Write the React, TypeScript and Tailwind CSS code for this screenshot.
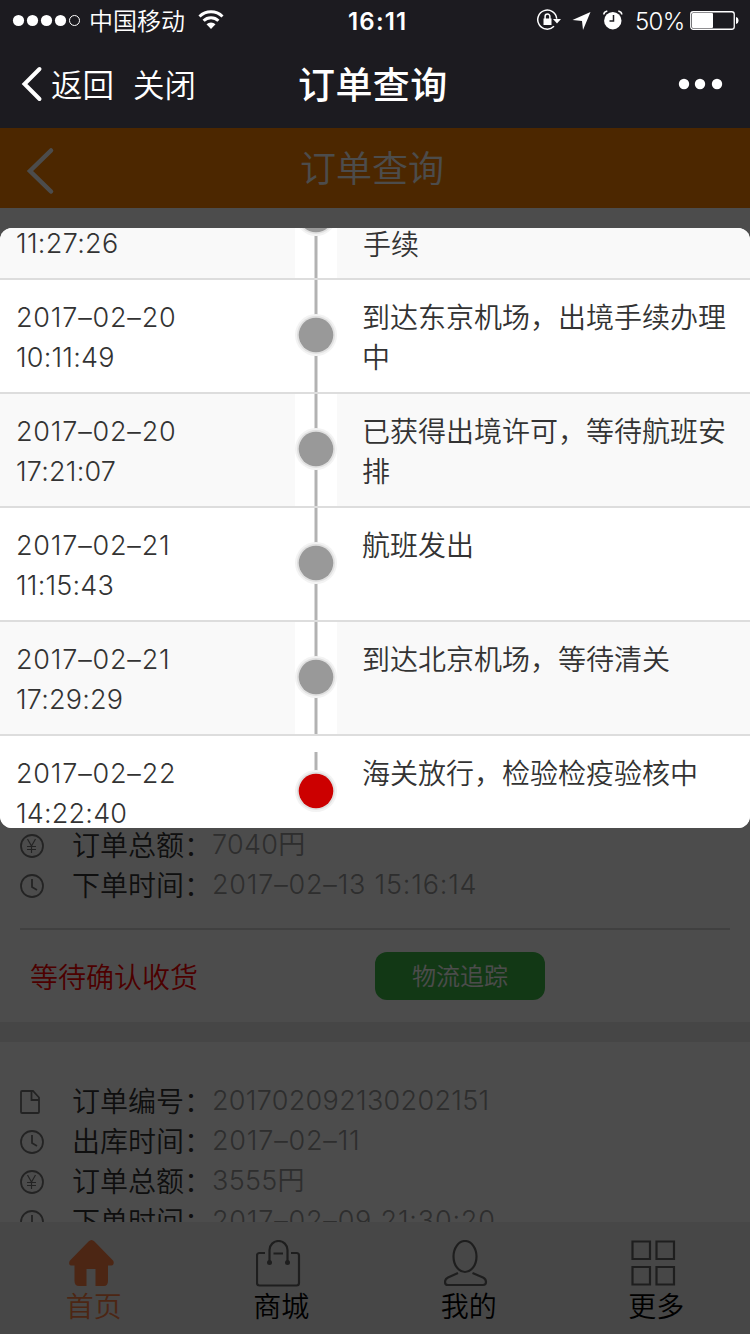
import React from 'react';

const FONT = "font-['Inter','Noto_Sans_CJK_SC',sans-serif]";

const events = [
  { date: '2017–02–20', time: '10:11:49', text: '到达东京机场，出境手续办理中' },
  { date: '2017–02–20', time: '17:21:07', text: '已获得出境许可，等待航班安排' },
  { date: '2017–02–21', time: '11:15:43', text: '航班发出' },
  { date: '2017–02–21', time: '17:29:29', text: '到达北京机场，等待清关' },
  { date: '2017–02–22', time: '14:22:40', text: '海关放行，检验检疫验核中' },
];

function Dot({ last = false, height = 112 }: { last?: boolean; height?: number }) {
  const cy = height / 2 - 1;
  return (
    <svg width="42" height={height} className="shrink-0 bg-white">
      <path d={last ? 'M21 16V40' : `M21 0V${height}`} stroke="#b2b2b2" strokeWidth="3" />
      <circle cx="21" cy={cy} r="21" fill="#f3f3f3" />
      <circle cx="21" cy={cy} r="19" fill="#e0e0e0" />
      <circle cx="21" cy={cy} r="17.3" fill={last ? '#cc0000' : '#999999'} />
    </svg>
  );
}

function ClockIcon() {
  return (
    <svg width="24" height="24" viewBox="0 0 24 24" fill="none" stroke="#777" strokeWidth="1.8">
      <circle cx="12" cy="12" r="11" />
      <path d="M12 5v8l5 3" />
    </svg>
  );
}

function YenIcon() {
  return (
    <svg width="24" height="24" viewBox="0 0 24 24" fill="none" stroke="#777" strokeWidth="1.2">
      <circle cx="12" cy="12" r="11" strokeWidth="1.8" />
      <path d="M7.500 5 11.500 12l4-7M7 12.500h9M7 15.500h9M11.500 12v7" />
    </svg>
  );
}

function FileIcon() {
  return (
    <svg width="24" height="24" viewBox="0 0 24 24" fill="none" stroke="#777" strokeWidth="1.8">
      <path d="M2 1h11l6 6.500V22a1 1 0 0 1-1 1H2a1 1 0 0 1-1-1V2a1 1 0 0 1 1-1zM11.500 1v9H19" />
    </svg>
  );
}

function InfoRow({ icon, label, value }: { icon: React.ReactNode; label: string; value: string }) {
  const isDate = value.includes('–');
  return (
    <div className="flex h-10 items-center pl-5">
      <div className="w-[52px] shrink-0 pt-1">{icon}</div>
      <div className="w-[140px] shrink-0 whitespace-nowrap pt-1 text-[28px] leading-10 text-[#333]">{label}：</div>
      <div className={`whitespace-nowrap pt-0.5 text-[27px] leading-10 text-[#999] ${isDate ? 'tracking-[0.8px]' : 'tracking-[0.3px]'}`}>{value}</div>
    </div>
  );
}

function StatusBar() {
  return (
    <div className="flex h-10 items-center">
      <svg width="80" height="40" viewBox="0 0 80 40" fill="#fff">
        <circle cx="18.500" cy="20.500" r="5.600" />
        <circle cx="32.500" cy="20.500" r="5.600" />
        <circle cx="46.500" cy="20.500" r="5.600" />
        <circle cx="60.500" cy="20.500" r="5.600" />
        <circle cx="74.500" cy="20.500" r="5" fill="none" stroke="#fff" />
      </svg>
      <span className="ml-[9px] w-[97px] whitespace-nowrap pt-[3px] text-2xl leading-10">中国移动</span>
      <svg className="ml-3" width="26" height="20" viewBox="0 0 26 20" fill="none" stroke="#fff" strokeWidth="3">
        <path d="M1.500 6.500a16.500 16.500 0 0 1 23 0M5.600 10.800a10.500 10.500 0 0 1 14.800 0" />
        <path d="M8.500 14.300a6.300 6.300 0 0 1 9 0L13 19z" fill="#fff" stroke="none" />
      </svg>
      <span className="ml-[124px] w-[188px] pt-[3px] text-2xl font-semibold leading-10 tracking-[1.2px]">16:11</span>
      <svg width="90" height="24" viewBox="0 0 90 24" className="shrink-0" fill="none" stroke="#fff">
        <path d="M18 18.300a9.500 9.500 0 1 1 2.700-7.500" strokeWidth="1.500" />
        <path d="M17 11h8l-4 4.500z" fill="#fff" stroke="none" />
        <path d="M7.500 10.500h8v6.500h-8z" fill="#fff" stroke="none" />
        <path d="M9.100 11V8.500a2.400 2.400 0 0 1 4.800 0V11" strokeWidth="1.500" />
        <path d="M54.500 4 36.500 12l9.500 1 1 9z" fill="#fff" stroke="none" />
        <circle cx="76.800" cy="12.700" r="8.700" fill="#fff" stroke="none" />
        <path d="M77.500 7v6h-4" stroke="#1c1b20" strokeWidth="1.500" />
        <path d="M67.800 6.500c0-2 1.500-3 3.500-3.500M82.300 3c2 .5 3.500 1.500 3.500 3.500" strokeWidth="1.500" />
      </svg>
      <span className="ml-[9px] w-[55px] pt-[3px] text-2xl leading-10 tracking-[-0.7px]">50%</span>
      <svg width="50" height="20" viewBox="0 0 50 20" fill="#fff" className="shrink-0">
        <rect x=".75" y="1.750" width="43.500" height="17.500" rx="2.500" fill="none" stroke="#fff" strokeWidth="1.300" />
        <rect x="2" y="3" width="21" height="15" rx="1" />
        <path d="M46 7c1.500.3 2.500 1.500 2.500 3.500S47.500 13.700 46 14z" />
      </svg>
    </div>
  );
}

const tabs = [
  {
    label: '首页',
    active: true,
    icon: <path d="M22.500 0c1 0 2 .5 3 1.500L44 20.500c1.500 2 .5 5-1.500 5H39V41c0 3-1.500 5-4 5h-8.500V29h-9v17H10c-3 0-4.500-2-4.500-5V25.500H2C0 25.500-.5 22.500 1 20.500L19.500 1.500c1-1 2-1.500 3-1.500z" fill="#ff7f45" stroke="none" />,
  },
  {
    label: '商城',
    icon: (
      <>
        <path d="M9 13H3.500c-1.500 0-2.500 1-2.500 2.500V43c0 1.500 1 2.500 2.500 2.500h37c1.500 0 2.500-1 2.500-2.500V15.500C43 14 42 13 40.500 13H35M17.500 13.500h9.500M13.500 22V10a9 9 0 0 1 18 0v12" />
        <circle cx="13.500" cy="22.500" r="2.500" fill="#666" stroke="none" />
        <circle cx="31.500" cy="22.500" r="2.500" fill="#666" stroke="none" />
      </>
    ),
  },
  {
    label: '我的',
    icon: (
      <>
        <ellipse cx="21" cy="16.500" rx="11.500" ry="15.500" />
        <path d="M14 33 4 37.500C2 38.500 1 40 1 42s1 3 3 3h35c2 0 3-1 3-3s-1-3.500-3-4.500L28.500 33" />
      </>
    ),
  },
  {
    label: '更多',
    icon: <path d="M1.500 1.500H19v17.500H1.500zM25.500 1.500H43v17.500H25.500zM1.500 27H19v17.500H1.500zM25.500 27H43v17.500H25.500z" />,
  },
];

export default function App() {
  return (
    <div className={`relative flex h-[1334px] w-[750px] flex-col overflow-hidden bg-white font-[350] ${FONT}`}>
      <header className="h-32 shrink-0 bg-[#1c1b20] text-white">
        <StatusBar />
        <div className="flex h-[88px] items-center">
          <svg width="22" height="36" viewBox="0 0 22 36" fill="none" stroke="#fff" strokeWidth="4" strokeLinecap="round" className="ml-[21px]">
            <path d="M18.500 3 3.500 18l15 15" />
          </svg>
          <span className="ml-2 w-[82px] pt-1 text-[31.500px]">返回</span>
          <span className="w-[165px] pt-1 text-[31.500px]">关闭</span>
          <h1 className="w-[380px] pt-1 text-[37px] font-medium tracking-[0.4px]">订单查询</h1>
          <svg width="46" height="12" viewBox="0 0 46 12" fill="#fff">
            <circle cx="6" cy="6" r="5.200" />
            <circle cx="22" cy="6" r="5.200" />
            <circle cx="39" cy="6" r="5.200" />
          </svg>
        </div>
      </header>

      <div className="flex h-20 shrink-0 items-center bg-[#ff8400] text-white">
        <svg width="30" height="48" viewBox="0 0 30 48" fill="none" stroke="#fff" strokeWidth="4.500" strokeLinecap="round" className="ml-[26px] mt-1.5">
          <path d="M25 3.500 4 24l21 20.500" />
        </svg>
        <h2 className="ml-[244px] pt-0.5 text-4xl">订单查询</h2>
      </div>

      <main className="h-[1014px] shrink-0 overflow-hidden">
        <section className="flex h-[814px] flex-col justify-end">
          <InfoRow icon={<YenIcon />} label="订单总额" value="7040円" />
          <InfoRow icon={<ClockIcon />} label="下单时间" value="2017–02–13 15:16:14" />
          <div className="mx-5 mt-6 flex h-[94px] items-center border-t-2 border-[#d8d8d8] pl-2.5">
            <span className="w-[345px] pt-1 text-[28px] text-[#ff0000]">等待确认收货</span>
            <button className="h-12 w-[170px] rounded-xl bg-[#3fbb49] pt-0.5 text-2xl text-white">物流追踪</button>
          </div>
        </section>
        <div className="h-5 bg-[#ebebeb]" />
        <section className="pt-[38px]">
          <InfoRow icon={<FileIcon />} label="订单编号" value="201702092130202151" />
          <InfoRow icon={<ClockIcon />} label="出库时间" value="2017–02–11" />
          <InfoRow icon={<YenIcon />} label="订单总额" value="3555円" />
          <InfoRow icon={<ClockIcon />} label="下单时间" value="2017–02–09 21:30:20" />
        </section>
      </main>

      <nav className="grid h-28 shrink-0 grid-cols-4 bg-[#ededed]">
        {tabs.map((tab) => (
          <div key={tab.label} className={`flex flex-col items-center pt-[18px] text-[28px] ${tab.active ? 'text-[#ff7f45]' : 'text-black'}`}>
            <svg width="46" height="47" viewBox="0 0 46 47" fill="none" stroke="#666" strokeWidth="2.200" className="mr-1">{tab.icon}</svg>
            <span className="leading-[41px]">{tab.label}</span>
          </div>
        ))}
      </nav>

      <div className="absolute inset-x-0 bottom-0 top-32 bg-black/70" />

      <div className="absolute inset-x-0 top-[228px] h-[600px] overflow-hidden rounded-xl bg-white text-[28px] leading-10 text-[#333]">
        <div className="flex h-[50px] items-end overflow-hidden bg-[#f9f9f9]">
          <div className="w-[295px] shrink-0 pb-3.5 pl-4 text-[27px] leading-10 tracking-[0.3px]">11:27:26</div>
          <Dot height={124} />
          <div className="pb-[13px] pl-[26px]">手续</div>
        </div>
        {events.map((e, i) => (
          <div key={i} className={`flex h-[114px] border-t-2 border-[#dddddd] ${i % 2 ? 'bg-[#f9f9f9]' : 'bg-white'}`}>
            <div className="w-[295px] shrink-0 pl-4 pt-[18px] text-[27px] leading-10">
              <div className="tracking-[0.8px]">{e.date}</div>
              <div className="tracking-[0.2px]">{e.time}</div>
            </div>
            <Dot last={i === events.length - 1} />
            <p className="pl-[25px] pr-[18px] pt-[18px]">{e.text}</p>
          </div>
        ))}
      </div>
    </div>
  );
}
